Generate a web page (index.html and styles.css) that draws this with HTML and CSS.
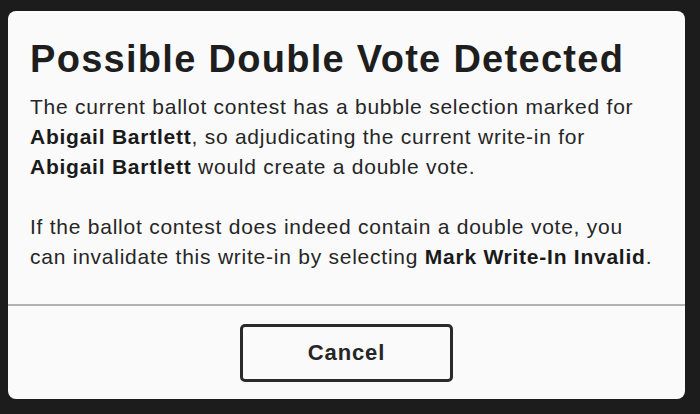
FILE: index.html
```html
<!DOCTYPE html>
<html>
<head>
<meta charset="utf-8">
<link rel="stylesheet" href="styles.css">
</head>
<body>
<div class="modal">
  <div class="content">
    <h1 class="title">Possible Double Vote Detected</h1>
    <p class="para">The current ballot contest has a bubble selection marked for <strong>Abigail Bartlett</strong>, so adjudicating the current write-in for <strong>Abigail Bartlett</strong> would create a double vote.</p>
    <p class="para">If the ballot contest does indeed contain a double vote, you can invalidate this write-in by selecting <strong>Mark Write-In Invalid</strong>.</p>
  </div>
  <div class="footer">
    <button class="btn">Cancel</button>
  </div>
</div>
</body>
</html>
```
FILE: styles.css
```css
html, body {
  margin: 0;
  padding: 0;
  background: #1c1c1c;
  height: 100%;
}
body {
  font-family: "Liberation Sans", Arial, sans-serif;
  color: #262626;
  padding: 11px 0 0 8px;
  box-sizing: border-box;
}
.modal {
  width: 677px;
  height: 388px;
  background: #fafafa;
  border-radius: 8px;
  display: flex;
  flex-direction: column;
  overflow: hidden;
}
.content {
  flex: 1;
  padding: 26px 20px 0 22px;
}
.title {
  margin: 0 0 11px 0;
  font-size: 38px;
  line-height: 44px;
  font-weight: 700;
  letter-spacing: 0.034em;
  color: #1e1e1e;
}
.para {
  margin: 0 0 30px 0;
  font-size: 21px;
  line-height: 30px;
  letter-spacing: 0.036em;
}
.para strong {
  color: #1a1a1a;
}
.footer {
  border-top: 2px solid #b3b3b3;
  display: flex;
  justify-content: center;
  padding: 18px 0 17px 0;
}
.btn {
  width: 213px;
  height: 58px;
  background: #fafafa;
  border: 3px solid #2a2a2a;
  border-radius: 5px;
  font-family: "Liberation Sans", Arial, sans-serif;
  font-size: 22px;
  font-weight: 700;
  letter-spacing: 0.04em;
  color: #262626;
}
```
